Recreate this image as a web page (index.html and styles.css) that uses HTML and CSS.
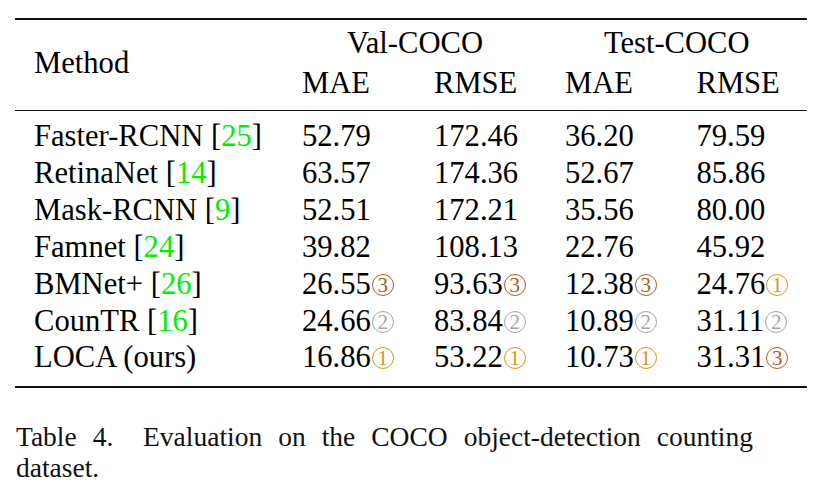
FILE: index.html
```html
<!DOCTYPE html>
<html>
<head>
<meta charset="utf-8">
<link rel="stylesheet" href="styles.css">
</head>
<body>
<div class="page">
  <div class="tbl">
    <div class="head">
      <div class="method">Method</div>
      <div class="group g-val">Val-COCO</div>
      <div class="group g-test">Test-COCO</div>
      <div class="cell">MAE</div>
      <div class="cell">RMSE</div>
      <div class="cell">MAE</div>
      <div class="cell">RMSE</div>
    </div>
    <div class="body">
      <div class="cell name">Faster-RCNN [<span class="ref">25</span>]</div>
      <div class="cell">52.79</div><div class="cell">172.46</div><div class="cell">36.20</div><div class="cell">79.59</div>

      <div class="cell name">RetinaNet [<span class="ref">14</span>]</div>
      <div class="cell">63.57</div><div class="cell">174.36</div><div class="cell">52.67</div><div class="cell">85.86</div>

      <div class="cell name">Mask-RCNN [<span class="ref">9</span>]</div>
      <div class="cell">52.51</div><div class="cell">172.21</div><div class="cell">35.56</div><div class="cell">80.00</div>

      <div class="cell name">Famnet [<span class="ref">24</span>]</div>
      <div class="cell">39.82</div><div class="cell">108.13</div><div class="cell">22.76</div><div class="cell">45.92</div>

      <div class="cell name">BMNet+ [<span class="ref">26</span>]</div>
      <div class="cell">26.55<span class="rank r3">3</span></div>
      <div class="cell">93.63<span class="rank r3">3</span></div>
      <div class="cell">12.38<span class="rank r3">3</span></div>
      <div class="cell">24.76<span class="rank r1">1</span></div>

      <div class="cell name">CounTR [<span class="ref">16</span>]</div>
      <div class="cell">24.66<span class="rank r2">2</span></div>
      <div class="cell">83.84<span class="rank r2">2</span></div>
      <div class="cell">10.89<span class="rank r2">2</span></div>
      <div class="cell">31.11<span class="rank r2">2</span></div>

      <div class="cell name">LOCA (ours)</div>
      <div class="cell">16.86<span class="rank r1">1</span></div>
      <div class="cell">53.22<span class="rank r1">1</span></div>
      <div class="cell">10.73<span class="rank r1">1</span></div>
      <div class="cell">31.31<span class="rank r3">3</span></div>
    </div>
  </div>
  <p class="caption">Table 4.&ensp; Evaluation on the COCO object-detection counting dataset.</p>
</div>
</body>
</html>
```

FILE: styles.css
```css
html, body {
  margin: 0;
  padding: 0;
  background: #ffffff;
}

.page {
  padding: 18px 0 0 15px;
  font-family: "Liberation Serif", "Times New Roman", serif;
  color: #000000;
}

.tbl {
  width: 792px;
  border-top: 2px solid #111111;
  border-bottom: 2px solid #111111;
  font-size: 30.6px;
}

.head,
.body {
  display: grid;
  grid-template-columns: 268.5px 132px 131px 131.5px 129px;
}

.head {
  padding: 5px 0 8.5px;
  border-bottom: 1px solid #111111;
  grid-template-rows: 37px 37px;
  row-gap: 2.5px;
  line-height: 37px;
}

.body {
  padding: 7.4px 0 10px;
  line-height: 36.83px;
}

.cell {
  padding: 0 18.5px;
  white-space: nowrap;
}

.name {
  padding-left: 19px;
}

.method {
  grid-row: 1 / span 2;
  align-self: center;
  padding-left: 19px;
}

.group {
  grid-column: span 2;
  text-align: center;
}

.ref {
  color: #00ee00;
}

.rank {
  display: inline-block;
  box-sizing: border-box;
  width: 22px;
  height: 22px;
  margin-left: 1px;
  border: 1.6px solid currentColor;
  border-radius: 50%;
  font-size: 21px;
  line-height: 20px;
  text-align: center;
  overflow: hidden;
  vertical-align: -2px;
}

.r1 { color: #d39817; }
.r2 { color: #a6a6a6; }
.r3 { color: #a65f2a; }

.caption {
  width: 737px;
  margin: 32.4px 0 0 1px;
  font-size: 27.5px;
  line-height: 31px;
  text-align: justify;
  color: #111111;
}
```
